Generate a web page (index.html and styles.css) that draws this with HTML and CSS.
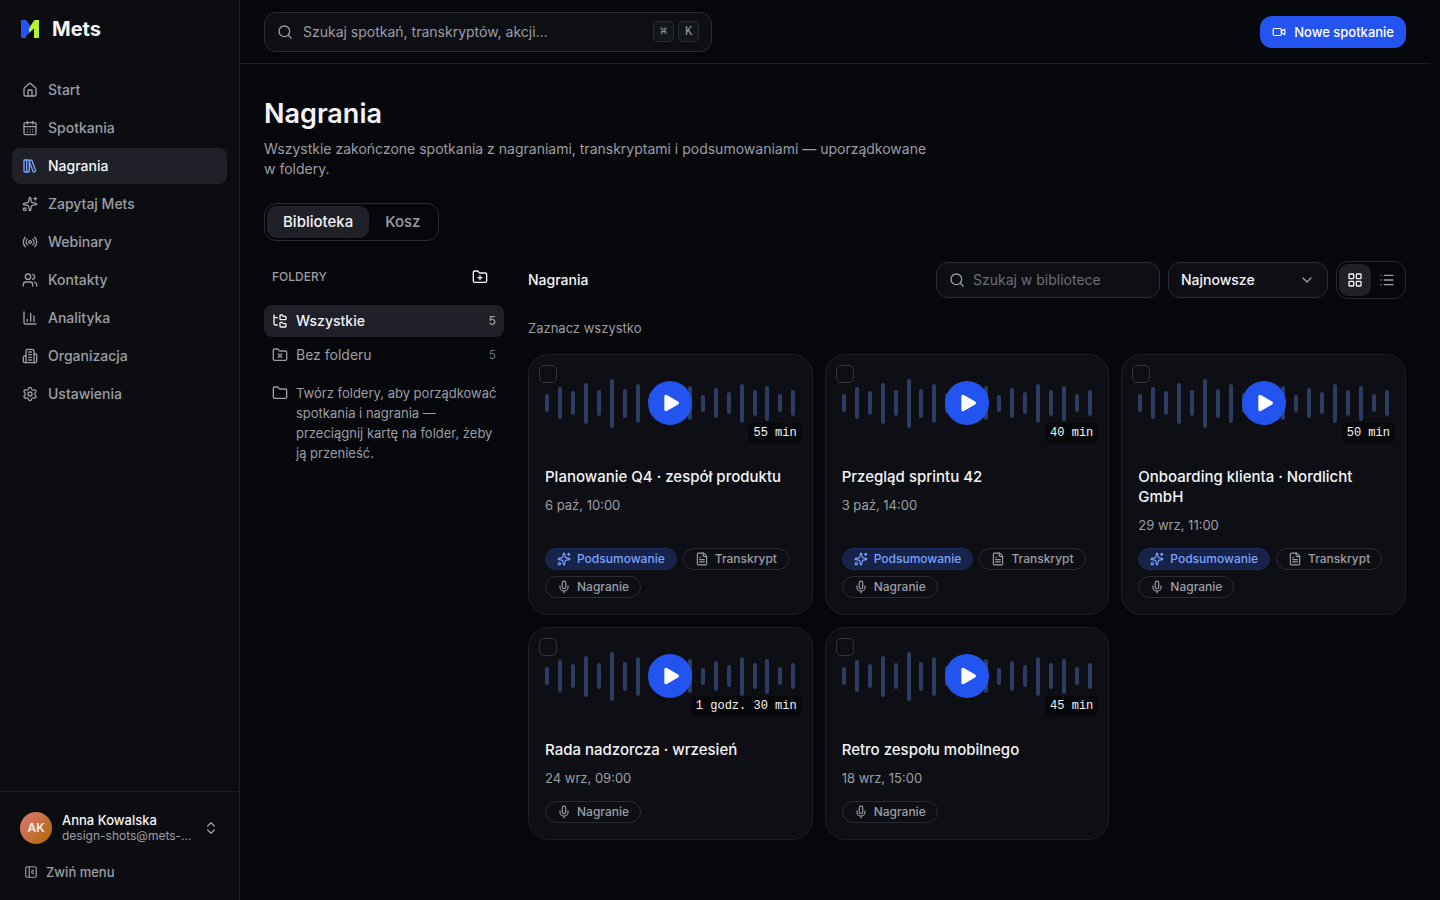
FILE: index.html
```html
<!DOCTYPE html>
<html lang="pl">
<head>
<meta charset="utf-8">
<meta name="viewport" content="width=device-width, initial-scale=1">
<title>Nagrania – Mets</title>
<link rel="stylesheet" href="styles.css">
</head>
<body>
<svg class="sprite" aria-hidden="true">
  <symbol id="home" viewBox="0 0 24 24"><path d="M15 21v-8a1 1 0 0 0-1-1h-4a1 1 0 0 0-1 1v8"/><path d="M3 10a2 2 0 0 1 .709-1.528l7-6a2 2 0 0 1 2.582 0l7 6A2 2 0 0 1 21 10v9a2 2 0 0 1-2 2H5a2 2 0 0 1-2-2z"/></symbol>
  <symbol id="calendar" viewBox="0 0 24 24"><path d="M8 2v4M16 2v4M3 10h18M8 14h.01M12 14h.01M16 14h.01M8 18h.01M12 18h.01M16 18h.01"/><rect width="18" height="18" x="3" y="4" rx="2"/></symbol>
  <symbol id="library" viewBox="0 0 24 24"><rect width="8" height="18" x="3" y="3" rx="1"/><path d="M7 3v18"/><path d="M20.4 18.9c.2.5-.1 1.1-.6 1.3l-1.9.7c-.5.2-1.1-.1-1.3-.6L11.1 5.1c-.2-.5.1-1.1.6-1.3l1.9-.7c.5-.2 1.1.1 1.3.6Z"/></symbol>
  <symbol id="sparkles" viewBox="0 0 24 24"><path d="M11.017 2.814a1 1 0 0 1 1.966 0l1.051 5.558a2 2 0 0 0 1.594 1.594l5.558 1.051a1 1 0 0 1 0 1.966l-5.558 1.051a2 2 0 0 0-1.594 1.594l-1.051 5.558a1 1 0 0 1-1.966 0l-1.051-5.558a2 2 0 0 0-1.594-1.594l-5.558-1.051a1 1 0 0 1 0-1.966l5.558-1.051a2 2 0 0 0 1.594-1.594z"/><path d="M20 2v4M22 4h-4"/><circle cx="4" cy="20" r="2"/></symbol>
  <symbol id="radio" viewBox="0 0 24 24"><path d="M4.9 19.1C1 15.2 1 8.8 4.9 4.9"/><path d="M7.8 16.2c-2.3-2.3-2.3-6.1 0-8.5"/><circle cx="12" cy="12" r="2"/><path d="M16.2 7.8c2.3 2.3 2.3 6.1 0 8.5"/><path d="M19.1 4.9C23 8.8 23 15.1 19.1 19"/></symbol>
  <symbol id="users" viewBox="0 0 24 24"><path d="M16 21v-2a4 4 0 0 0-4-4H6a4 4 0 0 0-4 4v2"/><circle cx="9" cy="7" r="4"/><path d="M22 21v-2a4 4 0 0 0-3-3.87M16 3.13a4 4 0 0 1 0 7.75"/></symbol>
  <symbol id="chart" viewBox="0 0 24 24"><path d="M3 3v16a2 2 0 0 0 2 2h16M18 17V9M13 17V5M8 17v-3"/></symbol>
  <symbol id="building" viewBox="0 0 24 24"><path d="M6 22V4a2 2 0 0 1 2-2h8a2 2 0 0 1 2 2v18Z"/><path d="M6 12H4a2 2 0 0 0-2 2v6a2 2 0 0 0 2 2h2M18 9h2a2 2 0 0 1 2 2v9a2 2 0 0 1-2 2h-2M10 6h4M10 10h4M10 14h4M10 18h4"/></symbol>
  <symbol id="gear" viewBox="0 0 24 24"><path d="M9.671 4.136a2.34 2.34 0 0 1 4.659 0 2.34 2.34 0 0 0 3.319 1.915 2.34 2.34 0 0 1 2.33 4.033 2.34 2.34 0 0 0 0 3.831 2.34 2.34 0 0 1-2.33 4.033 2.34 2.34 0 0 0-3.319 1.915 2.34 2.34 0 0 1-4.659 0 2.34 2.34 0 0 0-3.32-1.915 2.34 2.34 0 0 1-2.33-4.033 2.34 2.34 0 0 0 0-3.831A2.34 2.34 0 0 1 6.35 6.051a2.34 2.34 0 0 0 3.319-1.915"/><circle cx="12" cy="12" r="3"/></symbol>
  <symbol id="updown" viewBox="0 0 24 24"><path d="m7 15 5 5 5-5M7 9l5-5 5 5"/></symbol>
  <symbol id="collapse" viewBox="0 0 24 24"><rect width="18" height="18" x="3" y="3" rx="2"/><path d="M9 3v18M16 15l-3-3 3-3"/></symbol>
  <symbol id="search" viewBox="0 0 24 24"><circle cx="11" cy="11" r="8"/><path d="m21 21-4.34-4.34"/></symbol>
  <symbol id="video" viewBox="0 0 24 24"><path d="m16 13 5.223 3.482a.5.5 0 0 0 .777-.416V7.87a.5.5 0 0 0-.752-.432L16 10.5"/><rect x="2" y="6" width="14" height="12" rx="2"/></symbol>
  <symbol id="folder" viewBox="0 0 24 24"><path d="M20 20a2 2 0 0 0 2-2V8a2 2 0 0 0-2-2h-7.9a2 2 0 0 1-1.69-.9L9.6 3.9A2 2 0 0 0 7.93 3H4a2 2 0 0 0-2 2v13a2 2 0 0 0 2 2Z"/></symbol>
  <symbol id="folder-plus" viewBox="0 0 24 24"><path d="M12 10v6M9 13h6"/><path d="M20 20a2 2 0 0 0 2-2V8a2 2 0 0 0-2-2h-7.9a2 2 0 0 1-1.69-.9L9.6 3.9A2 2 0 0 0 7.93 3H4a2 2 0 0 0-2 2v13a2 2 0 0 0 2 2Z"/></symbol>
  <symbol id="folder-x" viewBox="0 0 24 24"><path d="m9.5 10.5 5 5M14.5 10.5l-5 5"/><path d="M20 20a2 2 0 0 0 2-2V8a2 2 0 0 0-2-2h-7.9a2 2 0 0 1-1.69-.9L9.6 3.9A2 2 0 0 0 7.93 3H4a2 2 0 0 0-2 2v13a2 2 0 0 0 2 2Z"/></symbol>
  <symbol id="folder-tree" viewBox="0 0 24 24"><path d="M20 10a1 1 0 0 0 1-1V6a1 1 0 0 0-1-1h-2.5a1 1 0 0 1-.8-.4l-.9-1.2A1 1 0 0 0 15 3h-2a1 1 0 0 0-1 1v5a1 1 0 0 0 1 1Z"/><path d="M20 21a1 1 0 0 0 1-1v-3a1 1 0 0 0-1-1h-2.9a1 1 0 0 1-.88-.55l-.42-.85a1 1 0 0 0-.92-.6H13a1 1 0 0 0-1 1v5a1 1 0 0 0 1 1Z"/><path d="M3 5a2 2 0 0 0 2 2h3M3 3v13a2 2 0 0 0 2 2h3"/></symbol>
  <symbol id="chevron" viewBox="0 0 24 24"><path d="m6 9 6 6 6-6"/></symbol>
  <symbol id="grid" viewBox="0 0 24 24"><rect width="7" height="7" x="3" y="3" rx="1"/><rect width="7" height="7" x="14" y="3" rx="1"/><rect width="7" height="7" x="14" y="14" rx="1"/><rect width="7" height="7" x="3" y="14" rx="1"/></symbol>
  <symbol id="list" viewBox="0 0 24 24"><path d="M3 5h.01M3 12h.01M3 19h.01M8 5h13M8 12h13M8 19h13"/></symbol>
  <symbol id="file" viewBox="0 0 24 24"><path d="M15 2H6a2 2 0 0 0-2 2v16a2 2 0 0 0 2 2h12a2 2 0 0 0 2-2V7Z"/><path d="M14 2v4a2 2 0 0 0 2 2h4M10 9H8M16 13H8M16 17H8"/></symbol>
  <symbol id="mic" viewBox="0 0 24 24"><path d="M12 19v3M19 10v2a7 7 0 0 1-14 0v-2"/><rect x="9" y="2" width="6" height="13" rx="3"/></symbol>
  <symbol id="play" viewBox="0 0 24 24"><path d="M5 4v16a1 1 0 0 0 1.500.870l13.500-8a1 1 0 0 0 0-1.740l-13.500-8A1 1 0 0 0 5 4z" fill="currentColor"/></symbol>
</svg>

<div class="app">
  <aside class="sidebar">
    <a class="brand" href="#">
      <svg class="brand-mark" viewBox="0 0 20 20" aria-hidden="true">
        <path d="M19 1h-4.500L9 9v5l5-4.500V19h5z" fill="#b9f22e"/>
        <path d="M1 1h5l4.500 6L9 9v5l-3 3V19H1z" fill="#2454f5"/>
      </svg>
      <span>Mets</span>
    </a>
    <nav class="nav" aria-label="Menu główne">
      <a href="#"><svg class="icon"><use href="#home"/></svg>Start</a>
      <a href="#"><svg class="icon"><use href="#calendar"/></svg>Spotkania</a>
      <a href="#" class="active" aria-current="page"><svg class="icon"><use href="#library"/></svg>Nagrania</a>
      <a href="#"><svg class="icon"><use href="#sparkles"/></svg>Zapytaj Mets</a>
      <a href="#"><svg class="icon"><use href="#radio"/></svg>Webinary</a>
      <a href="#"><svg class="icon"><use href="#users"/></svg>Kontakty</a>
      <a href="#"><svg class="icon"><use href="#chart"/></svg>Analityka</a>
      <a href="#"><svg class="icon"><use href="#building"/></svg>Organizacja</a>
      <a href="#"><svg class="icon"><use href="#gear"/></svg>Ustawienia</a>
    </nav>
    <div class="sidebar-foot">
      <button class="account" type="button">
        <span class="avatar">AK</span>
        <span class="who"><strong>Anna Kowalska</strong><span>design-shots@mets-…</span></span>
        <svg class="icon"><use href="#updown"/></svg>
      </button>
      <button class="collapse" type="button"><svg class="icon"><use href="#collapse"/></svg>Zwiń menu</button>
    </div>
  </aside>

  <div class="page">
    <header class="topbar">
      <button class="global-search" type="button">
        <svg class="icon"><use href="#search"/></svg>
        <span class="label">Szukaj spotkań, transkryptów, akcji…</span>
        <kbd>⌘</kbd><kbd>K</kbd>
      </button>
      <button class="primary" type="button"><svg class="icon"><use href="#video"/></svg>Nowe spotkanie</button>
    </header>

    <main class="main">
      <h1>Nagrania</h1>
      <p class="lead">Wszystkie zakończone spotkania z nagraniami, transkryptami i podsumowaniami — uporządkowane w&nbsp;foldery.</p>
      <div class="segmented tabs" role="tablist">
        <button class="on" type="button" role="tab" aria-selected="true">Biblioteka</button>
        <button type="button" role="tab" aria-selected="false">Kosz</button>
      </div>

      <div class="columns">
        <section class="folders">
          <div class="folders-head">
            <h2>FOLDERY</h2>
            <button type="button" aria-label="Nowy folder"><svg class="icon"><use href="#folder-plus"/></svg></button>
          </div>
          <div class="folder-list">
            <button class="folder on" type="button"><svg class="icon"><use href="#folder-tree"/></svg><span>Wszystkie</span><b>5</b></button>
            <button class="folder" type="button"><svg class="icon"><use href="#folder-x"/></svg><span>Bez folderu</span><b>5</b></button>
          </div>
          <p class="hint"><svg class="icon"><use href="#folder"/></svg><span>Twórz foldery, aby porządkować spotkania i nagrania — przeciągnij kartę na folder, żeby ją&nbsp;przenieść.</span></p>
        </section>

        <section class="library">
          <div class="toolbar">
            <h2>Nagrania</h2>
            <label class="field"><svg class="icon"><use href="#search"/></svg><input type="search" placeholder="Szukaj w bibliotece" aria-label="Szukaj w bibliotece"></label>
            <label class="select"><select aria-label="Sortowanie"><option>Najnowsze</option><option>Najstarsze</option></select><svg class="icon"><use href="#chevron"/></svg></label>
            <div class="segmented view">
              <button class="on" type="button" aria-label="Siatka"><svg class="icon"><use href="#grid"/></svg></button>
              <button type="button" aria-label="Lista"><svg class="icon"><use href="#list"/></svg></button>
            </div>
          </div>
          <button class="select-all" type="button">Zaznacz wszystko</button>

          <div class="cards">
            <article class="card">
              <div class="media"><div class="wave"></div><input type="checkbox" aria-label="Zaznacz: Planowanie Q4"><button class="play" type="button" aria-label="Odtwórz"><svg class="icon"><use href="#play"/></svg></button><span class="time">55 min</span></div>
              <div class="body">
                <h3>Planowanie Q4 · zespół produktu</h3>
                <p>6 paź, 10:00</p>
                <div class="chips"><span class="chip ai"><svg class="icon"><use href="#sparkles"/></svg>Podsumowanie</span><span class="chip"><svg class="icon"><use href="#file"/></svg>Transkrypt</span><span class="chip"><svg class="icon"><use href="#mic"/></svg>Nagranie</span></div>
              </div>
            </article>
            <article class="card">
              <div class="media"><div class="wave"></div><input type="checkbox" aria-label="Zaznacz: Przegląd sprintu 42"><button class="play" type="button" aria-label="Odtwórz"><svg class="icon"><use href="#play"/></svg></button><span class="time">40 min</span></div>
              <div class="body">
                <h3>Przegląd sprintu 42</h3>
                <p>3 paź, 14:00</p>
                <div class="chips"><span class="chip ai"><svg class="icon"><use href="#sparkles"/></svg>Podsumowanie</span><span class="chip"><svg class="icon"><use href="#file"/></svg>Transkrypt</span><span class="chip"><svg class="icon"><use href="#mic"/></svg>Nagranie</span></div>
              </div>
            </article>
            <article class="card">
              <div class="media"><div class="wave"></div><input type="checkbox" aria-label="Zaznacz: Onboarding klienta"><button class="play" type="button" aria-label="Odtwórz"><svg class="icon"><use href="#play"/></svg></button><span class="time">50 min</span></div>
              <div class="body">
                <h3>Onboarding klienta · Nordlicht GmbH</h3>
                <p>29 wrz, 11:00</p>
                <div class="chips"><span class="chip ai"><svg class="icon"><use href="#sparkles"/></svg>Podsumowanie</span><span class="chip"><svg class="icon"><use href="#file"/></svg>Transkrypt</span><span class="chip"><svg class="icon"><use href="#mic"/></svg>Nagranie</span></div>
              </div>
            </article>
            <article class="card">
              <div class="media"><div class="wave"></div><input type="checkbox" aria-label="Zaznacz: Rada nadzorcza"><button class="play" type="button" aria-label="Odtwórz"><svg class="icon"><use href="#play"/></svg></button><span class="time">1 godz. 30 min</span></div>
              <div class="body">
                <h3>Rada nadzorcza · wrzesień</h3>
                <p>24 wrz, 09:00</p>
                <div class="chips"><span class="chip"><svg class="icon"><use href="#mic"/></svg>Nagranie</span></div>
              </div>
            </article>
            <article class="card">
              <div class="media"><div class="wave"></div><input type="checkbox" aria-label="Zaznacz: Retro zespołu mobilnego"><button class="play" type="button" aria-label="Odtwórz"><svg class="icon"><use href="#play"/></svg></button><span class="time">45 min</span></div>
              <div class="body">
                <h3>Retro zespołu mobilnego</h3>
                <p>18 wrz, 15:00</p>
                <div class="chips"><span class="chip"><svg class="icon"><use href="#mic"/></svg>Nagranie</span></div>
              </div>
            </article>
          </div>
        </section>
      </div>
    </main>
  </div>
</div>
<script src="wave.js"></script>
</body>
</html>
```

FILE: wave.js
```js
const levels = [18, 32, 24, 41, 26, 49, 29, 39, 20, 36, 28, 34, 17, 30, 22, 39, 26, 35, 18, 26];

document.querySelectorAll('.wave').forEach((wave) => {
  levels.forEach((level) => {
    const bar = document.createElement('i');
    bar.style.height = level + 'px';
    wave.append(bar);
  });
});
```

FILE: styles.css
```css
:root {
  --bg: #06070b;
  --panel: #0c0d11;
  --surface: #0e0f14;
  --raised: #1f2028;
  --line: #1d1e23;
  --line-strong: #2b2c32;
  --text: #f4f4f6;
  --muted: #9c9da5;
  --faint: #6d6e76;
  --blue: #2454f0;
  --sky: #7ba3ff;
}

* { box-sizing: border-box; }

body {
  margin: 0;
  background: var(--bg);
  color: var(--text);
  font: 14px/20px Inter, "Liberation Sans", sans-serif;
}

h1, h2, h3, p { margin: 0; }
a { color: inherit; text-decoration: none; }
button, input, select { font: inherit; color: inherit; }
button { padding: 0; border: 0; background: none; text-align: left; cursor: pointer; }

.sprite { display: none; }

.icon {
  flex: none;
  width: 16px;
  height: 16px;
  fill: none;
  stroke: currentColor;
  stroke-width: 2;
  stroke-linecap: round;
  stroke-linejoin: round;
}

.app {
  display: grid;
  grid-template-columns: 240px minmax(0, 1fr);
  min-height: 100vh;
}

/* Sidebar */
.sidebar {
  display: flex;
  flex-direction: column;
  background: var(--panel);
  border-right: 1px solid var(--line);
}

.brand {
  display: flex;
  align-items: center;
  gap: 12px;
  height: 58px;
  padding: 0 20px;
  font-size: 20px;
  font-weight: 700;
}

.brand-mark { width: 20px; height: 20px; }

.nav {
  display: flex;
  flex-direction: column;
  gap: 2px;
  padding: 14px 12px;
}

.nav a {
  display: flex;
  align-items: center;
  gap: 10px;
  height: 36px;
  padding: 0 10px;
  border-radius: 8px;
  color: var(--muted);
  font-weight: 500;
}

.nav .active { background: var(--raised); color: var(--text); }
.nav .active .icon { color: var(--sky); }

.sidebar-foot {
  display: flex;
  flex-direction: column;
  gap: 8px;
  margin-top: auto;
  padding: 12px 12px 16px;
  border-top: 1px solid var(--line);
}

.account {
  display: flex;
  align-items: center;
  gap: 10px;
  height: 48px;
  padding: 0 8px;
}

.account .icon { color: var(--muted); }

.avatar {
  display: grid;
  place-items: center;
  width: 32px;
  height: 32px;
  border-radius: 50%;
  background: linear-gradient(135deg, #e0787c, #a86a00);
  font-size: 12px;
  font-weight: 600;
}

.who {
  display: flex;
  flex: 1;
  flex-direction: column;
  min-width: 0;
  font-size: 12px;
  line-height: 16px;
  color: var(--muted);
}

.who strong { font-size: 13px; font-weight: 500; color: var(--text); }
.who span { white-space: nowrap; }

.collapse {
  display: flex;
  align-items: center;
  gap: 8px;
  height: 24px;
  padding: 0 12px;
  color: var(--muted);
  font-size: 13px;
  font-weight: 500;
}

.collapse .icon { width: 14px; height: 14px; }

/* Top bar */
.page { padding-right: 10px; min-width: 0; }

.topbar {
  display: flex;
  align-items: center;
  justify-content: space-between;
  height: 64px;
  padding: 0 24px;
  border-bottom: 1px solid var(--line);
}

.global-search {
  display: flex;
  align-items: center;
  gap: 4px;
  width: 448px;
  height: 40px;
  padding: 0 12px;
  border: 1px solid var(--line-strong);
  border-radius: 12px;
  background: var(--surface);
  color: var(--muted);
}

.global-search .label { flex: 1; padding-left: 6px; }

kbd {
  display: grid;
  place-items: center;
  width: 21px;
  height: 21px;
  border: 1px solid var(--line-strong);
  border-radius: 5px;
  background: #15161b;
  font: 12px/18px "Liberation Mono", "DejaVu Sans Mono", monospace;
}

.primary {
  display: flex;
  align-items: center;
  gap: 8px;
  height: 32px;
  padding: 0 12px;
  border-radius: 12px;
  background: var(--blue);
  color: #fff;
  font-size: 13px;
  font-weight: 500;
}

.primary .icon { width: 14px; height: 14px; }

/* Page head */
.main { padding: 32px 24px 48px; }

h1 { font-size: 27px; line-height: 36px; font-weight: 600; }

.lead { max-width: 672px; margin-top: 7px; color: var(--muted); }

.segmented {
  display: inline-flex;
  padding: 2px;
  border: 1px solid var(--line-strong);
  border-radius: 12px;
}

.segmented button {
  height: 32px;
  border-radius: 9px;
  color: var(--muted);
  font-weight: 500;
}

.segmented .on { background: var(--raised); color: var(--text); }

.tabs { margin-top: 24px; vertical-align: top; }
.tabs button { padding: 0 16px; font-size: 15px; }

.columns {
  display: grid;
  grid-template-columns: 240px minmax(0, 1fr);
  gap: 24px;
  margin-top: 20px;
}

/* Folders */
.folders-head {
  display: flex;
  align-items: center;
  justify-content: space-between;
  height: 32px;
  padding: 0 16px 0 8px;
}

.folders-head h2 { font-size: 12px; font-weight: 500; color: var(--muted); }
.folders-head .icon { display: block; }

.folder-list { display: flex; flex-direction: column; gap: 2px; margin-top: 12px; }

.folder {
  display: flex;
  align-items: center;
  gap: 8px;
  height: 32px;
  padding: 0 8px;
  border-radius: 8px;
  color: var(--muted);
}

.folder span { flex: 1; }
.folder b { font-size: 12px; font-weight: 400; color: var(--faint); }
.folder.on { background: var(--raised); color: var(--text); font-weight: 500; }
.folder.on b { color: var(--muted); font-weight: 500; }

.hint {
  display: flex;
  gap: 8px;
  padding: 12px 4px 12px 8px;
  color: var(--muted);
  font-size: 13px;
}

.hint .icon { margin-top: 2px; }
.hint span { flex: 1; min-width: 0; }

/* Library */
.toolbar { display: flex; align-items: center; gap: 8px; }
.toolbar h2 { flex: 1; font-size: 14px; font-weight: 500; }

.field, .select {
  display: flex;
  align-items: center;
  height: 36px;
  border: 1px solid var(--line-strong);
  border-radius: 12px;
  background: var(--surface);
}

.field { gap: 8px; width: 224px; padding: 0 12px; }
.field .icon { color: var(--muted); }

.field input {
  flex: 1;
  min-width: 0;
  padding: 0;
  border: 0;
  outline: 0;
  background: none;
}

.field input::placeholder { color: var(--faint); opacity: 1; }

.select { position: relative; width: 160px; }

.select select {
  width: 100%;
  height: 100%;
  padding: 0 32px 0 12px;
  border: 0;
  background: none;
  appearance: none;
  font-weight: 500;
}

.select .icon {
  position: absolute;
  right: 12px;
  color: var(--muted);
  pointer-events: none;
}

.view button { display: grid; place-items: center; width: 32px; }

.select-all {
  display: block;
  margin: 19px 0 16px;
  color: var(--muted);
  font-size: 13px;
}

.cards {
  display: grid;
  grid-template-columns: repeat(3, minmax(0, 1fr));
  gap: 12px;
}

.card {
  display: flex;
  flex-direction: column;
  border: 1px solid var(--line);
  border-radius: 20px;
  background: var(--surface);
}

.media {
  position: relative;
  display: grid;
  place-items: center;
  height: 96px;
}

.wave {
  display: flex;
  grid-area: 1 / 1;
  align-items: center;
  justify-content: space-between;
  width: 100%;
  padding: 0 16px;
}

.wave i { width: 4px; border-radius: 2px; background: #2d3d61; }

.media input {
  position: absolute;
  top: 10px;
  left: 10px;
  width: 18px;
  height: 18px;
  margin: 0;
  border: 1px solid #33343a;
  border-radius: 5px;
  background: var(--surface);
  appearance: none;
}

.play {
  display: grid;
  grid-area: 1 / 1;
  place-items: center;
  z-index: 1;
  width: 44px;
  height: 44px;
  border-radius: 50%;
  background: var(--blue);
  color: #fff;
}

.play .icon { width: 20px; height: 20px; margin-left: 2px; }

.time {
  position: absolute;
  right: 10px;
  bottom: 8px;
  z-index: 1;
  padding: 0 5px;
  border-radius: 5px;
  background: #07080a;
  font: 12px/20px "Liberation Mono", "DejaVu Sans Mono", monospace;
}

.body { display: flex; flex: 1; flex-direction: column; padding: 16px; }
.body h3 { font-size: 15px; font-weight: 500; }
.body p { margin: 8px 0 13px; color: var(--muted); font-size: 13px; }

.chips { display: flex; flex-wrap: wrap; gap: 6px; margin-top: auto; }

.chip {
  display: flex;
  align-items: center;
  gap: 6px;
  height: 22px;
  padding: 0 11px;
  border: 1px solid var(--line-strong);
  border-radius: 11px;
  color: var(--muted);
  font-size: 12px;
  font-weight: 500;
}

.chip .icon { width: 14px; height: 14px; }
.chip.ai { border-color: #1b2b5c; background: #172348; color: var(--sky); }
```
